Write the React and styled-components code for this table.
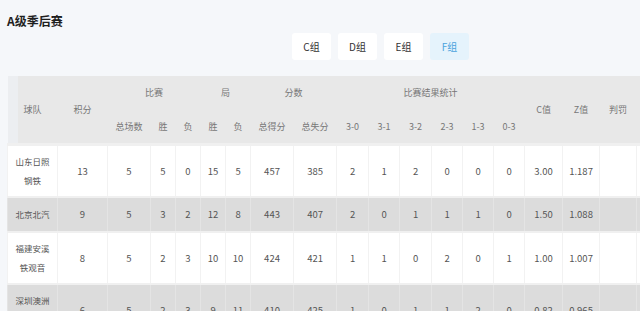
import React from "react";
import styled, { createGlobalStyle } from "styled-components";

const GlobalStyle = createGlobalStyle`
  body {
    margin: 0;
    background: #f5f7fa;
    font-family: "Noto Sans", "Noto Sans CJK SC", sans-serif;
    overflow: hidden;
  }
`;

const Page = styled.div`
  width: 640px;
  height: 311px;
  padding-left: 7px;
  box-sizing: border-box;
  overflow: hidden;
`;

const Title = styled.h3`
  margin: 13px 0 0;
  font-size: 12px;
  line-height: 16px;
  font-weight: 700;
  color: #1f1f1f;
  font-family: "Noto Sans CJK SC", sans-serif;
`;

const Tabs = styled.div`
  display: flex;
  gap: 7px;
  margin-top: 4px;
  padding-left: 285px;
`;

const Tab = styled.div`
  width: 39px;
  height: 27px;
  border-radius: 3px;
  display: flex;
  justify-content: center;
  align-items: center;
  font-size: 10px;
  font-family: "Noto Sans CJK SC", sans-serif;
  background: ${(p) => (p.active ? "#e5f3fc" : "#fff")};
  color: ${(p) => (p.active ? "#4ba3dc" : "#333")};
`;

const TableWrap = styled.div`
  margin-top: 16px;
  width: 700px;
`;

const Table = styled.table`
  border-collapse: collapse;
  table-layout: fixed;
  width: 689px;
  font-family: "Noto Sans CJK SC", sans-serif;
`;

const Head = styled.thead`
  background: #e8e8e8;
  border-bottom: 3px solid #f0f0f0;
`;

const Th = styled.th`
  font-weight: 400;
  font-size: 9px;
  color: #777;
  height: ${(p) => (p.low ? 34 : 33)}px;
  padding: 0;
  text-align: center;
  vertical-align: middle;
  background: ${(p) => (p.edge ? "linear-gradient(90deg, #eceef1 10px, #e8e8e8 10px)" : "transparent")};
`;

const Row = styled.tr`
  background: ${(p) => (p.shade ? "#dcdcdc" : "#fff")};
`;

const Td = styled.td`
  font-size: 9.5px;
  color: #555;
  text-align: center;
  vertical-align: middle;
  padding: 6px 0;
  height: 21px;
  line-height: 19px;
  border-left: 1px solid ${(p) => (p.shade ? "#e4e4e4" : "#f2f2f2")};
  border-bottom: 2px solid #f0f0f0;
`;

const Team = styled.span`
  display: inline-block;
  width: 36px;
  font-size: 8.5px;
  word-break: break-all;
`;

const widths = [50, 50, 43, 25, 25, 25, 25, 43, 43, 32, 31, 32, 31, 31, 31, 38, 37, 37, 60];

const rows = [
  ["山东日照钢铁", 13, 5, 5, 0, 15, 5, 457, 385, 2, 1, 2, 0, 0, 0, "3.00", "1.187", "", ""],
  ["北京北汽", 9, 5, 3, 2, 12, 8, 443, 407, 2, 0, 1, 1, 1, 0, "1.50", "1.088", "", ""],
  ["福建安溪铁观音", 8, 5, 2, 3, 10, 10, 424, 421, 1, 1, 0, 2, 0, 1, "1.00", "1.007", "", ""],
  ["深圳澳洲鹏城", 6, 5, 2, 3, 9, 11, 410, 425, 1, 0, 1, 1, 2, 0, "0.82", "0.965", "", ""],
];

const subs = ["总场数", "胜", "负", "胜", "负", "总得分", "总失分", "3-0", "3-1", "3-2", "2-3", "1-3", "0-3"];

export default function App() {
  return (
    <>
      <GlobalStyle />
      <Page>
        <Title>A级季后赛</Title>
        <Tabs>
          <Tab>C组</Tab>
          <Tab>D组</Tab>
          <Tab>E组</Tab>
          <Tab active>F组</Tab>
        </Tabs>
        <TableWrap>
          <Table>
            <colgroup>
              {widths.map((w, i) => (
                <col key={i} style={{ width: w }} />
              ))}
            </colgroup>
            <Head>
              <tr>
                <Th rowSpan={2} edge>球队</Th>
                <Th rowSpan={2}>积分</Th>
                <Th colSpan={3}>比赛</Th>
                <Th colSpan={2}>局</Th>
                <Th colSpan={2}>分数</Th>
                <Th colSpan={6}>比赛结果统计</Th>
                <Th rowSpan={2}>C值</Th>
                <Th rowSpan={2}>Z值</Th>
                <Th rowSpan={2}>判罚</Th>
                <Th rowSpan={2}></Th>
              </tr>
              <tr>
                {subs.map((s, i) => (
                  <Th key={i} low>{s}</Th>
                ))}
              </tr>
            </Head>
            <tbody>
              {rows.map((r, i) => (
                <Row key={i} shade={i % 2 === 1}>
                  {r.map((v, j) => (
                    <Td key={j} shade={i % 2 === 1}>
                      {j === 0 ? <Team>{v}</Team> : v}
                    </Td>
                  ))}
                </Row>
              ))}
            </tbody>
          </Table>
        </TableWrap>
      </Page>
    </>
  );
}
